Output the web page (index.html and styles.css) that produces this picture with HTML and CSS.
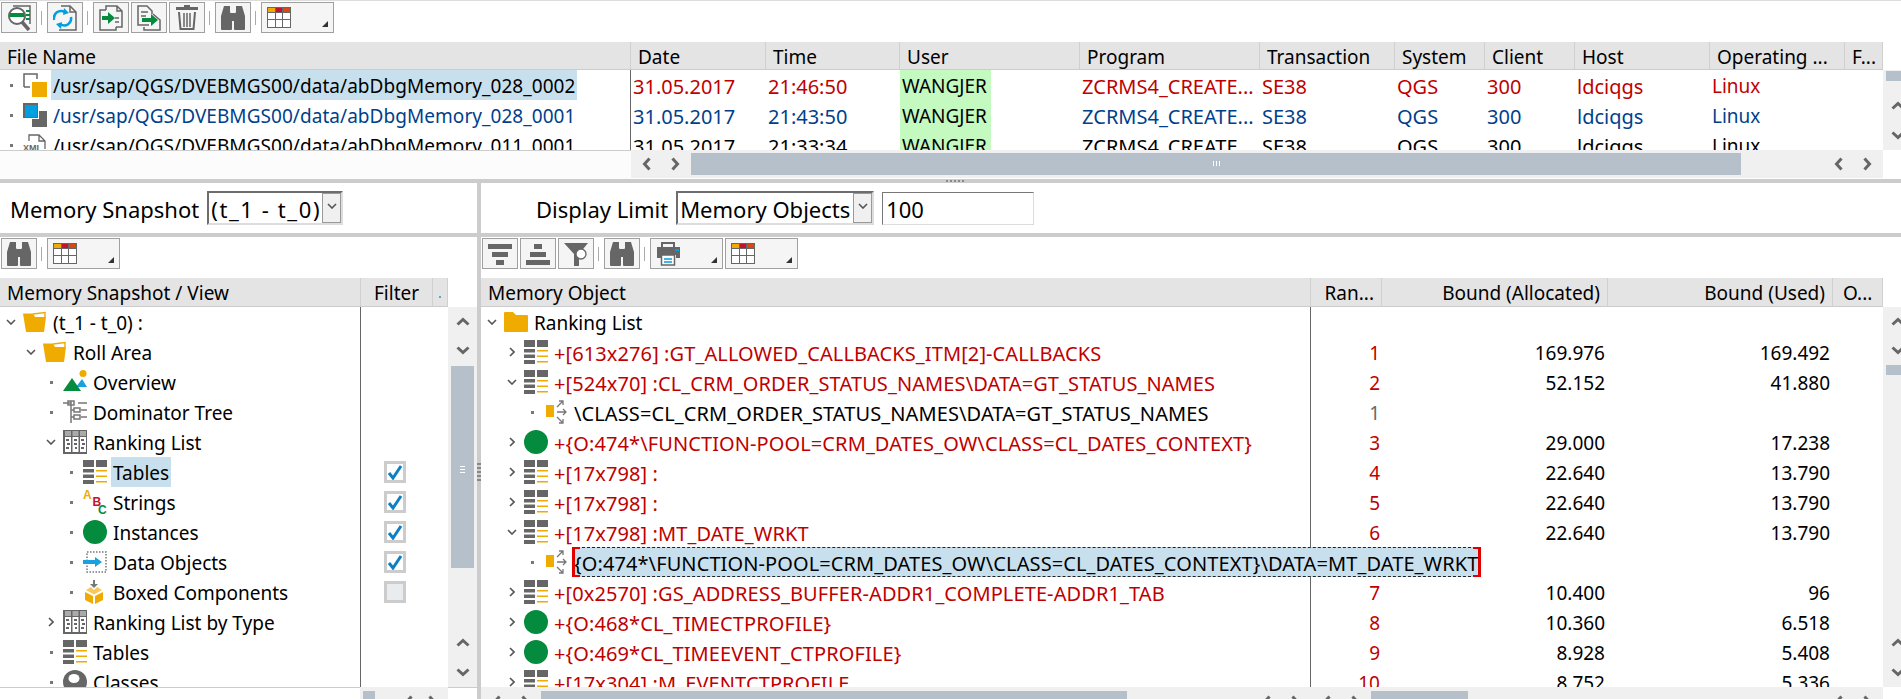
FILE: index.html
```
<!DOCTYPE html>
<html lang="en">
<head>
<meta charset="utf-8">
<title>Memory Inspector</title>
<link rel="stylesheet" href="styles.css">
</head>
<body>
<svg class="defs" xmlns="http://www.w3.org/2000/svg">
  <symbol id="c-d" viewBox="0 0 10 6"><path d="M1 1l4 4 4-4" class="st-ch"/></symbol>
  <symbol id="c-r" viewBox="0 0 6 10"><path d="M1 1l4 4-4 4" class="st-ch"/></symbol>
  <symbol id="sb-u" viewBox="0 0 14 9"><path d="M1.5 7.5L7 2.5l5.5 5" class="st-sb"/></symbol>
  <symbol id="sb-d" viewBox="0 0 14 9"><path d="M1.5 1.5L7 6.5l5.5-5" class="st-sb"/></symbol>
  <symbol id="sb-l" viewBox="0 0 9 14"><path d="M7.5 1.5L2.5 7l5 5.500" class="st-sb"/></symbol>
  <symbol id="sb-r" viewBox="0 0 9 14"><path d="M1.500 1.500L6.500 7l-5 5.500" class="st-sb"/></symbol>

  <symbol id="i-table" viewBox="0 0 24 24">
    <path fill="#666" d="M0 0h11v7H0zM13 0h11v7H13zM0 9h11v3.500H0zM0 14.500h11V18H0zM0 20h11v4H0z"/>
    <path fill="#f0ab00" d="M13 10h11v1.500H13zM13 15.500h11V17H13zM13 21h11v1.500H13z"/>
  </symbol>
  <symbol id="i-inst" viewBox="0 0 24 24"><circle cx="12" cy="12" r="12" fill="#048b3d"/></symbol>
  <symbol id="i-fopen" viewBox="0 0 24 24">
    <path d="M10 4L22 2.500V7" fill="none" stroke="#f0ab00" stroke-width="1.400"/>
    <path fill="#f0ab00" d="M0 3.500h10L12 7h11l-2 15H3z"/>
  </symbol>
  <symbol id="i-folder" viewBox="0 0 24 24">
    <path fill="#f0ab00" d="M0 3a1 1 0 0 1 1-1h8l3 3h11a1 1 0 0 1 1 1v15a1 1 0 0 1-1 1H1a1 1 0 0 1-1-1z"/>
  </symbol>
  <symbol id="i-over" viewBox="0 0 24 24">
    <circle cx="20" cy="3.500" r="3.500" fill="#f0ab00"/>
    <path fill="#1ba1dc" d="M19 9l5 8H13z"/>
    <path fill="#048b3d" d="M9 8l9 13H0z"/>
  </symbol>
  <symbol id="i-dom" viewBox="0 0 24 24">
    <path fill="none" stroke="#777" stroke-width="1.500" d="M0 3h8M8 1v22M8 10h3M8 17h3M15 3h9M18 10h6M18 17h6"/>
    <path fill="none" stroke="#777" stroke-width="1.500" d="M5 1h6v4H5zM11 8h6v4h-6zM11 15h6v4h-6z"/>
  </symbol>
  <symbol id="i-rank" viewBox="0 0 24 24">
    <path fill="#666" d="M0 0h24v24H0z"/>
    <path fill="#aaa" d="M2 1h6v5H2zM9.500 1h6v5h-6zM17 1h6v5h-6z"/>
    <path fill="#fff" d="M2 7h6v15H2zM9.500 7h6v15h-6zM17 7h6v15h-6z"/>
    <path fill="#666" d="M3 9h3v2H3zM4 13h3v2H4zM3 17h3v2H3zM11 9h3v2h-3zM11 13h3v2h-3zM12 17h2v2h-2zM18 9h3v2h-3zM19 13h3v2h-3zM18 17h3v2h-3z"/>
  </symbol>
  <symbol id="i-data" viewBox="0 0 24 24">
    <rect x="4" y="2" width="19" height="20" fill="none" stroke="#777" stroke-width="1.500" stroke-dasharray="1.500 1.500"/>
    <path fill="#1ba1e0" d="M0 10h12V7l7 5-7 5v-3H0z"/>
  </symbol>
  <symbol id="i-box" viewBox="0 0 24 24">
    <path fill="#777" d="M10 0h2v4h3l-4 4-4-4h3z"/>
    <path fill="#f0ab00" d="M2 12l8 4v8l-8-4zM20 12l-8 4v8l8-4z"/>
    <path fill="#f7c85a" d="M3 10l5-3 3 3 3-3 5 3-8 4.500z"/>
  </symbol>
  <symbol id="i-class" viewBox="0 0 24 24">
    <circle cx="12" cy="12" r="12" fill="#666"/><ellipse cx="11" cy="8.500" rx="5.500" ry="4.500" fill="#fff"/>
  </symbol>
  <symbol id="i-link" viewBox="0 0 24 24">
    <rect x="2" y="5" width="8" height="12" fill="#f0ab00"/>
    <path fill="none" stroke="#777" stroke-width="1.300" d="M13 7l6-6M15 1h4v4M13 12h9M19 9l3 3-3 3M13 17l6 6M15 23h4v-4"/>
  </symbol>
  <symbol id="f-a" viewBox="0 0 24 24">
    <path fill="none" stroke="#666" stroke-width="1.500" d="M1 14V1h13v5"/><path fill="none" stroke="#666" stroke-width="1.500" d="M1 14h6"/>
    <rect x="9" y="9" width="15" height="15" fill="#f0ab00"/>
  </symbol>
  <symbol id="f-b" viewBox="0 0 24 24">
    <path fill="#666" d="M9 8h15v16H9z"/><path fill="#fff" d="M0 0h16v16H0z"/>
    <path fill="#666" d="M0 0h15v15H0z"/><path fill="#009fe0" d="M2 2h12v12H2z"/>
  </symbol>

  <symbol id="t-find" viewBox="0 0 24 26">
    <circle cx="10" cy="11" r="8" fill="#fff" stroke="#666" stroke-width="2"/>
    <path stroke="#666" stroke-width="3.500" d="M15 17l7 8"/>
    <path fill="none" stroke="#666" stroke-width="1.500" d="M6 1h17v18"/>
    <path fill="#048b3d" d="M3 8h14v4H3zM19 5h4v2h-4zM19 9h4v2h-4zM19 13h4v2h-4z"/>
  </symbol>
  <symbol id="t-sync" viewBox="0 0 24 26">
    <path fill="none" stroke="#666" stroke-width="1.500" d="M8 1h9l6 6v18H6"/><path fill="none" stroke="#666" stroke-width="1.500" d="M17 1v6h6"/>
    <path fill="none" stroke="#009fe0" stroke-width="2.500" d="M1 15C0 8 6 4 12 7M18 12c1 6-5 11-11 7"/>
    <path fill="#009fe0" d="M11 3l5 5-6 2zM8 24l-5-5 6-2z"/>
  </symbol>
  <symbol id="t-imp" viewBox="0 0 24 26">
    <path fill="none" stroke="#666" stroke-width="1.500" d="M7 5V1h11l5 5v16h-6M18 1v5h5"/>
    <path fill="none" stroke="#666" stroke-width="1.500" d="M7 5H1v20h16v-3"/>
    <path stroke="#666" stroke-width="1.500" d="M16 13h4M16 17h4"/>
    <path fill="#048b3d" d="M3 11h6V7l7 6-7 6v-4H3z"/>
  </symbol>
  <symbol id="t-exp" viewBox="0 0 24 26">
    <path fill="none" stroke="#666" stroke-width="1.500" d="M12 20H1V1h9l5 5v3"/>
    <path stroke="#666" stroke-width="1.500" d="M4 7h7M4 11h5"/>
    <path fill="none" stroke="#666" stroke-width="1.500" d="M16 9l7 6v10H7v-3"/>
    <path fill="#048b3d" d="M5 13h9V9l7 6-7 6v-4H5z"/>
  </symbol>
  <symbol id="t-del" viewBox="0 0 24 26">
    <path fill="#666" d="M9 0h6v2h8v3H1V2h8z"/>
    <path fill="none" stroke="#666" stroke-width="2" d="M4 7l1.500 17h13L20 7"/>
    <path stroke="#666" stroke-width="1.500" d="M9 8v14M12 8v14M15 8v14"/>
  </symbol>
  <symbol id="t-bino" viewBox="0 0 24 26">
    <path fill="#666" d="M3 1h6v6l2 3v14a1 1 0 0 1-1 1H1a1 1 0 0 1-1-1V11zM15 1h6l3 10v13a1 1 0 0 1-1 1h-9a1 1 0 0 1-1-1V10l2-3zM10 8h4v8h-4z"/>
  </symbol>
  <symbol id="t-grid" viewBox="0 0 24 26">
    <path fill="#666" d="M0 2h24v21H0z"/>
    <path fill="#f0ab00" d="M1 3h7v4H1z"/><path fill="#c8102e" d="M9 3h6v4H9z"/><path fill="#d9480f" d="M16 3h7v4h-7z"/>
    <path fill="#fff" d="M1 8h7v6H1zM9 8h6v6H9zM16 8h7v6h-7zM1 15h7v7H1zM9 15h6v7H9zM16 15h7v7h-7z"/>
  </symbol>
  <symbol id="t-sdn" viewBox="0 0 24 26"><path fill="#666" d="M0 3h24v5H0zM4 11h16v5H4zM8 19h8v5H8z"/></symbol>
  <symbol id="t-sup" viewBox="0 0 24 26"><path fill="#666" d="M8 3h8v5H8zM4 11h16v5H4zM0 19h24v5H0z"/></symbol>
  <symbol id="t-fil" viewBox="0 0 24 26">
    <path fill="#666" d="M0 2h24l-9 11v12H10V13z"/>
    <circle cx="17" cy="13" r="5" fill="#fff" stroke="#666" stroke-width="1.300"/>
  </symbol>
  <symbol id="t-prn" viewBox="0 0 24 26">
    <path fill="none" stroke="#666" stroke-width="2" d="M6 6V2h12v4"/>
    <path fill="#666" d="M1 6h23v11h-4v-3H5v3H1z"/><path fill="#009fe0" d="M19 8h4v2h-4z"/>
    <path fill="#fff" stroke="#666" stroke-width="1.500" d="M5.500 14h13v10h-13z"/>
    <path stroke="#009fe0" stroke-width="1.500" d="M8 18h8M8 21h8"/>
  </symbol>
</svg>

<main class="app">
  <section class="top">
    <div class="toolbar">
      <button class="btn"><svg class="tic"><use href="#t-find"/></svg></button><i class="sep"></i>
      <button class="btn"><svg class="tic"><use href="#t-sync"/></svg></button><i class="sep"></i>
      <button class="btn"><svg class="tic"><use href="#t-imp"/></svg></button>
      <button class="btn"><svg class="tic"><use href="#t-exp"/></svg></button>
      <button class="btn"><svg class="tic"><use href="#t-del"/></svg></button><i class="sep"></i>
      <button class="btn"><svg class="tic"><use href="#t-bino"/></svg></button><i class="sep"></i>
      <button class="btn btn-menu"><svg class="tic"><use href="#t-grid"/></svg></button>
    </div>
    <div class="head head-top files">
      <div class="hc">File Name</div><div class="hc">Date</div><div class="hc">Time</div><div class="hc">User</div><div class="hc">Program</div><div class="hc">Transaction</div><div class="hc">System</div><div class="hc">Client</div><div class="hc">Host</div><div class="hc">Operating ...</div><div class="hc hc-more">F...</div>
    </div>
    <div class="body-top">
      <div class="rows-top">
        <div class="frow files red">
          <div class="fc fc-name"><i class="dot"></i><svg class="ico"><use href="#f-a"/></svg><span class="lbl hl black path">/usr/sap/QGS/DVEBMGS00/data/abDbgMemory_028_0002</span></div>
          <div class="dc">31.05.2017</div><div class="dc">21:46:50</div><div class="dc"><span class="user">WANGJER</span></div><div class="dc">ZCRMS4_CREATE...</div><div class="dc">SE38</div><div class="dc">QGS</div><div class="dc">300</div><div class="dc">ldciqgs</div><div class="dc dc-os">Linux</div>
        </div>
        <div class="frow files blue">
          <div class="fc fc-name"><i class="dot"></i><svg class="ico"><use href="#f-b"/></svg><span class="lbl path">/usr/sap/QGS/DVEBMGS00/data/abDbgMemory_028_0001</span></div>
          <div class="dc">31.05.2017</div><div class="dc">21:43:50</div><div class="dc"><span class="user">WANGJER</span></div><div class="dc">ZCRMS4_CREATE...</div><div class="dc">SE38</div><div class="dc">QGS</div><div class="dc">300</div><div class="dc">ldciqgs</div><div class="dc dc-os">Linux</div>
        </div>
        <div class="frow files">
          <div class="fc fc-name"><i class="dot"></i><svg class="ico" viewBox="0 0 24 24"><path fill="none" stroke="#666" stroke-width="1.300" d="M6 8V2h10l6 6v8M16 2v6h6"/><text x="0" y="18" class="xml">XML</text></svg><span class="lbl path">/usr/sap/QGS/DVEBMGS00/data/abDbgMemory_011_0001</span></div>
          <div class="dc">31.05.2017</div><div class="dc">21:33:34</div><div class="dc"><span class="user">WANGJER</span></div><div class="dc">ZCRMS4_CREATE...</div><div class="dc">SE38</div><div class="dc">QGS</div><div class="dc">300</div><div class="dc">ldciqgs</div><div class="dc dc-os">Linux</div>
        </div>
      </div>
      <div class="vbar vbar-clip">
        <div class="vbar-in">
          <div class="vthumb vthumb-top"></div>
          <div class="vspace"></div>
          <div class="varrow"><svg class="sb-v"><use href="#sb-u"/></svg></div>
          <div class="varrow"><svg class="sb-v"><use href="#sb-d"/></svg></div>
        </div>
      </div>
    </div>
    <div class="foot-top">
      <div class="blank blank-name"></div>
      <div class="hbar hbar-top">
        <span class="harrows"><svg class="sb-h"><use href="#sb-l"/></svg><svg class="sb-h"><use href="#sb-r"/></svg></span>
        <div class="hthumb hthumb-top"><i class="grip-h"></i></div>
        <span class="harrows harrows-end"><svg class="sb-h"><use href="#sb-l"/></svg><svg class="sb-h"><use href="#sb-r"/></svg></span>
      </div>
    </div>
  </section>
  <div class="split-h"><i class="grip-top"></i></div>

  <section class="lower">
    <div class="pane pane-left">
      <div class="param">
        <label class="plabel">Memory Snapshot</label>
        <div class="combo combo-snap"><span class="combo-val combo-wide">(t_1 - t_0)</span><span class="combo-btn"><svg class="chev-d"><use href="#c-d"/></svg></span></div>
      </div>
      <div class="split-bar"></div>
      <div class="toolbar toolbar-low">
        <button class="btn"><svg class="tic"><use href="#t-bino"/></svg></button><i class="sep"></i>
        <button class="btn btn-menu"><svg class="tic"><use href="#t-grid"/></svg></button>
      </div>
      <div class="head head-low nav">
        <div class="hc">Memory Snapshot / View</div><div class="hc hc-filter">Filter</div><div class="hc hc-mini"><i class="mini-dot"></i></div>
      </div>
      <div class="body-low">
        <div class="rows-low nav-rows">
          <div class="trow nav-row"><div class="tc l0"><span class="exp"><svg class="chev-d"><use href="#c-d"/></svg></span><svg class="ico"><use href="#i-fopen"/></svg><span class="lbl">(t_1 - t_0) :</span></div><div class="fc2"></div></div>
          <div class="trow nav-row"><div class="tc l1"><span class="exp"><svg class="chev-d"><use href="#c-d"/></svg></span><svg class="ico"><use href="#i-fopen"/></svg><span class="lbl">Roll Area</span></div><div class="fc2"></div></div>
          <div class="trow nav-row"><div class="tc l2"><span class="exp"><i class="dot"></i></span><svg class="ico"><use href="#i-over"/></svg><span class="lbl">Overview</span></div><div class="fc2"></div></div>
          <div class="trow nav-row"><div class="tc l2"><span class="exp"><i class="dot"></i></span><svg class="ico"><use href="#i-dom"/></svg><span class="lbl">Dominator Tree</span></div><div class="fc2"></div></div>
          <div class="trow nav-row"><div class="tc l2"><span class="exp"><svg class="chev-d"><use href="#c-d"/></svg></span><svg class="ico"><use href="#i-rank"/></svg><span class="lbl">Ranking List</span></div><div class="fc2"></div></div>
          <div class="trow nav-row"><div class="tc l3"><span class="exp"><i class="dot"></i></span><svg class="ico"><use href="#i-table"/></svg><span class="lbl hl">Tables</span></div><div class="fc2"><span class="check"><svg class="tick" viewBox="0 0 16 16"><path d="M2 9l4 5 8-12" class="st-tick"/></svg></span></div></div>
          <div class="trow nav-row"><div class="tc l3"><span class="exp"><i class="dot"></i></span><svg class="ico" viewBox="0 0 24 24"><text x="0" y="9" class="abc abc-a">A</text><text x="9.500" y="16" class="abc abc-b">B</text><text x="15" y="24" class="abc abc-c">C</text></svg><span class="lbl">Strings</span></div><div class="fc2"><span class="check"><svg class="tick" viewBox="0 0 16 16"><path d="M2 9l4 5 8-12" class="st-tick"/></svg></span></div></div>
          <div class="trow nav-row"><div class="tc l3"><span class="exp"><i class="dot"></i></span><svg class="ico"><use href="#i-inst"/></svg><span class="lbl">Instances</span></div><div class="fc2"><span class="check"><svg class="tick" viewBox="0 0 16 16"><path d="M2 9l4 5 8-12" class="st-tick"/></svg></span></div></div>
          <div class="trow nav-row"><div class="tc l3"><span class="exp"><i class="dot"></i></span><svg class="ico"><use href="#i-data"/></svg><span class="lbl">Data Objects</span></div><div class="fc2"><span class="check"><svg class="tick" viewBox="0 0 16 16"><path d="M2 9l4 5 8-12" class="st-tick"/></svg></span></div></div>
          <div class="trow nav-row"><div class="tc l3"><span class="exp"><i class="dot"></i></span><svg class="ico"><use href="#i-box"/></svg><span class="lbl">Boxed Components</span></div><div class="fc2"><span class="check check-off"></span></div></div>
          <div class="trow nav-row"><div class="tc l2"><span class="exp"><svg class="chev-r"><use href="#c-r"/></svg></span><svg class="ico"><use href="#i-rank"/></svg><span class="lbl">Ranking List by Type</span></div><div class="fc2"></div></div>
          <div class="trow nav-row"><div class="tc l2"><span class="exp"><i class="dot"></i></span><svg class="ico"><use href="#i-table"/></svg><span class="lbl">Tables</span></div><div class="fc2"></div></div>
          <div class="trow nav-row"><div class="tc l2"><span class="exp"><i class="dot"></i></span><svg class="ico"><use href="#i-class"/></svg><span class="lbl">Classes</span></div><div class="fc2"></div></div>
        </div>
        <div class="vbar">
          <div class="vbar-in">
            <div class="varrow varrow-first"><svg class="sb-v"><use href="#sb-u"/></svg></div>
            <div class="varrow"><svg class="sb-v"><use href="#sb-d"/></svg></div>
            <div class="vthumb vthumb-nav"><i class="grip-v"></i></div>
            <div class="vspace"></div>
            <div class="varrow"><svg class="sb-v"><use href="#sb-u"/></svg></div>
            <div class="varrow"><svg class="sb-v"><use href="#sb-d"/></svg></div>
          </div>
        </div>
      </div>
      <div class="foot-low foot-left">
        <div class="blank-low"></div>
        <div class="hbar hbar-nav">
          <div class="hthumb hthumb-nav"></div>
          <span class="harrows harrows-nav"><svg class="sb-h"><use href="#sb-l"/></svg><svg class="sb-h"><use href="#sb-r"/></svg></span>
        </div>
      </div>
    </div>

    <div class="split-v"><i class="grip-v2"></i></div>

    <div class="pane pane-right">
      <div class="param param-right">
        <label class="plabel">Display Limit</label>
        <div class="combo combo-limit"><span class="combo-val">Memory Objects</span><span class="combo-btn"><svg class="chev-d"><use href="#c-d"/></svg></span></div>
        <div class="field">100</div>
      </div>
      <div class="split-bar"></div>
      <div class="toolbar toolbar-low toolbar-right">
        <button class="btn"><svg class="tic"><use href="#t-sdn"/></svg></button>
        <button class="btn"><svg class="tic"><use href="#t-sup"/></svg></button>
        <button class="btn"><svg class="tic"><use href="#t-fil"/></svg></button><i class="sep"></i>
        <button class="btn"><svg class="tic"><use href="#t-bino"/></svg></button><i class="sep"></i>
        <button class="btn btn-menu"><svg class="tic"><use href="#t-prn"/></svg></button>
        <button class="btn btn-menu"><svg class="tic"><use href="#t-grid"/></svg></button>
      </div>
      <div class="head head-low objs">
        <div class="hc">Memory Object</div><div class="hc hc-r">Ran...</div><div class="hc hc-r">Bound (Allocated)</div><div class="hc hc-r">Bound (Used)</div><div class="hc hc-o">O...</div>
      </div>
      <div class="body-low">
        <div class="rows-low obj-rows">
          <div class="trow objs"><div class="tc l0 tc-obj"><span class="exp"><svg class="chev-d"><use href="#c-d"/></svg></span><svg class="ico"><use href="#i-folder"/></svg><span class="lbl">Ranking List</span></div><div class="num"></div><div class="num"></div><div class="num"></div></div>
          <div class="trow objs"><div class="tc l1 tc-obj"><span class="exp"><svg class="chev-r"><use href="#c-r"/></svg></span><svg class="ico"><use href="#i-table"/></svg><span class="lbl obj red">+[613x276] :GT_ALLOWED_CALLBACKS_ITM[2]-CALLBACKS</span></div><div class="num red">1</div><div class="num">169.976</div><div class="num">169.492</div></div>
          <div class="trow objs"><div class="tc l1 tc-obj"><span class="exp"><svg class="chev-d"><use href="#c-d"/></svg></span><svg class="ico"><use href="#i-table"/></svg><span class="lbl obj red">+[524x70] :CL_CRM_ORDER_STATUS_NAMES\DATA=GT_STATUS_NAMES</span></div><div class="num red">2</div><div class="num">52.152</div><div class="num">41.880</div></div>
          <div class="trow objs"><div class="tc l2 tc-obj"><span class="exp"><i class="dot"></i></span><svg class="ico"><use href="#i-link"/></svg><span class="lbl obj">\CLASS=CL_CRM_ORDER_STATUS_NAMES\DATA=GT_STATUS_NAMES</span></div><div class="num gray">1</div><div class="num"></div><div class="num"></div></div>
          <div class="trow objs"><div class="tc l1 tc-obj"><span class="exp"><svg class="chev-r"><use href="#c-r"/></svg></span><svg class="ico"><use href="#i-inst"/></svg><span class="lbl obj red">+{O:474*\FUNCTION-POOL=CRM_DATES_OW\CLASS=CL_DATES_CONTEXT}</span></div><div class="num red">3</div><div class="num">29.000</div><div class="num">17.238</div></div>
          <div class="trow objs"><div class="tc l1 tc-obj"><span class="exp"><svg class="chev-r"><use href="#c-r"/></svg></span><svg class="ico"><use href="#i-table"/></svg><span class="lbl obj red">+[17x798] :</span></div><div class="num red">4</div><div class="num">22.640</div><div class="num">13.790</div></div>
          <div class="trow objs"><div class="tc l1 tc-obj"><span class="exp"><svg class="chev-r"><use href="#c-r"/></svg></span><svg class="ico"><use href="#i-table"/></svg><span class="lbl obj red">+[17x798] :</span></div><div class="num red">5</div><div class="num">22.640</div><div class="num">13.790</div></div>
          <div class="trow objs"><div class="tc l1 tc-obj"><span class="exp"><svg class="chev-d"><use href="#c-d"/></svg></span><svg class="ico"><use href="#i-table"/></svg><span class="lbl obj red">+[17x798] :MT_DATE_WRKT</span></div><div class="num red">6</div><div class="num">22.640</div><div class="num">13.790</div></div>
          <div class="trow objs trow-sel"><div class="tc l2 tc-obj"><span class="exp"><i class="dot"></i></span><svg class="ico"><use href="#i-link"/></svg><span class="lbl obj sel">{O:474*\FUNCTION-POOL=CRM_DATES_OW\CLASS=CL_DATES_CONTEXT}\DATA=MT_DATE_WRKT<i class="brk brk-l"></i><i class="brk brk-r"></i></span></div><div class="num"></div><div class="num"></div><div class="num"></div></div>
          <div class="trow objs"><div class="tc l1 tc-obj"><span class="exp"><svg class="chev-r"><use href="#c-r"/></svg></span><svg class="ico"><use href="#i-table"/></svg><span class="lbl obj red">+[0x2570] :GS_ADDRESS_BUFFER-ADDR1_COMPLETE-ADDR1_TAB</span></div><div class="num red">7</div><div class="num">10.400</div><div class="num">96</div></div>
          <div class="trow objs"><div class="tc l1 tc-obj"><span class="exp"><svg class="chev-r"><use href="#c-r"/></svg></span><svg class="ico"><use href="#i-inst"/></svg><span class="lbl obj red">+{O:468*CL_TIMECTPROFILE}</span></div><div class="num red">8</div><div class="num">10.360</div><div class="num">6.518</div></div>
          <div class="trow objs"><div class="tc l1 tc-obj"><span class="exp"><svg class="chev-r"><use href="#c-r"/></svg></span><svg class="ico"><use href="#i-inst"/></svg><span class="lbl obj red">+{O:469*CL_TIMEEVENT_CTPROFILE}</span></div><div class="num red">9</div><div class="num">8.928</div><div class="num">5.408</div></div>
          <div class="trow objs"><div class="tc l1 tc-obj"><span class="exp"><svg class="chev-r"><use href="#c-r"/></svg></span><svg class="ico"><use href="#i-table"/></svg><span class="lbl obj red">+[17x304] :M_EVENTCTPROFILE</span></div><div class="num red">10</div><div class="num">8.752</div><div class="num">5.336</div></div>
        </div>
        <div class="vbar vbar-clip">
          <div class="vbar-in">
            <div class="varrow varrow-first"><svg class="sb-v"><use href="#sb-u"/></svg></div>
            <div class="varrow"><svg class="sb-v"><use href="#sb-d"/></svg></div>
            <div class="vthumb vthumb-obj"></div>
            <div class="vspace"></div>
            <div class="varrow"><svg class="sb-v"><use href="#sb-u"/></svg></div>
            <div class="varrow"><svg class="sb-v"><use href="#sb-d"/></svg></div>
          </div>
        </div>
      </div>
      <div class="foot-low foot-right">
        <div class="hbar hbar-a">
          <span class="harrows"><svg class="sb-h"><use href="#sb-l"/></svg><svg class="sb-h"><use href="#sb-r"/></svg></span>
          <div class="hthumb hthumb-a"></div>
          <span class="harrows harrows-end"><svg class="sb-h"><use href="#sb-l"/></svg><svg class="sb-h"><use href="#sb-r"/></svg></span>
        </div>
        <div class="hbar hbar-b">
          <span class="harrows"><svg class="sb-h"><use href="#sb-l"/></svg><svg class="sb-h"><use href="#sb-r"/></svg></span>
          <div class="hthumb hthumb-b"></div>
          <span class="harrows harrows-end"><svg class="sb-h"><use href="#sb-l"/></svg><svg class="sb-h"><use href="#sb-r"/></svg></span>
        </div>
      </div>
    </div>
  </section>
</main>
</body>
</html>
```
FILE: styles.css
```
* { box-sizing: border-box; }
html, body { margin: 0; padding: 0; height: 100%; overflow: hidden; background: #fff; }
body { font-family: "Noto Sans", "Open Sans", sans-serif; font-size: 19px; color: #000; }
.defs { position: absolute; width: 0; height: 0; overflow: hidden; }
.st-ch { fill: none; stroke: #555; stroke-width: 1.6; }
.st-sb { fill: none; stroke: #666; stroke-width: 3; }
.st-tick { fill: none; stroke: #0f7fc4; stroke-width: 3; }
.abc { font-family: "Liberation Sans", sans-serif; font-weight: 700; font-size: 12px; }
.abc-a { fill: #f0ab00; }
.abc-b { fill: #c8102e; }
.abc-c { fill: #048b3d; }
.xml { font-family: "Liberation Sans", sans-serif; font-weight: 700; font-size: 9px; fill: #666; }

.app { width: 1901px; height: 699px; display: flex; flex-direction: column; overflow: hidden; }
.top { height: 179px; flex: none; border-top: 1px solid #ddd; }
.toolbar { height: 41px; display: flex; align-items: flex-start; gap: 2px; padding: 1px 0 0 1px; }
.btn { width: 36px; height: 31px; padding: 0; flex: none; background: #f5f5f5; border: 1px solid #a0a0a0; position: relative; display: flex; align-items: center; justify-content: center; }
.btn-menu { width: 73px; justify-content: flex-start; padding-left: 5px; }
.btn-menu::after { content: ""; position: absolute; right: 5px; bottom: 5px; border-style: solid; border-width: 0 0 6px 6px; border-color: transparent transparent #333 transparent; }
.tic { width: 24px; height: 26px; flex: none; }
.sep { width: 1px; height: 14px; margin: 9px 3px 0 2px; background: #aaa; flex: none; }

.head { background: #e4e4e4; border-bottom: 1px solid #ccc; display: grid; }
.hc { padding: 0 7px; overflow: hidden; white-space: nowrap; border-right: 1px solid #d0d0d0; line-height: 30px; }
.hc-r { text-align: right; }
.hc-more { padding-left: 7px; }
.hc-o { padding-left: 10px; }
.hc-filter { padding-left: 13px; }
.hc-mini { position: relative; }
.mini-dot { position: absolute; right: 6px; bottom: 8px; width: 2px; height: 2px; background: #5aa7d6; }
.head-top { height: 28px; width: 1883px; }
.head-low { height: 29px; }
.head-low .hc { line-height: 31px; }
.files { grid-template-columns: 631px 135px 134px 180px 180px 135px 90px 90px 135px 135px 38px; }

.body-top { display: flex; height: 80px; }
.rows-top { width: 1883px; overflow: hidden; }
.frow { display: grid; height: 30px; line-height: 33px; white-space: nowrap; }
.fc { display: flex; align-items: center; }
.fc-name { padding-left: 21px; position: relative; border-right: 1px solid #666; height: 30px; }
.fc-name .dot { position: absolute; left: 10px; top: 14px; }
.dc { padding-left: 2px; overflow: hidden; height: 30px; font-size: 20px; }
.dc-os { font-size: 19px; }
.path { letter-spacing: 0.05px; }
.user { display: block; height: 30px; margin-left: -2px; padding: 0 2px; width: 91px; background: #c4f9bf; color: #000; font-size: 19px; }
.red { color: #bf0000; }
.blue { color: #003f8c; }
.gray { color: #666; }
.black { color: #000; }
.hl { background: #c8e0ee; }

.vbar { width: 29px; flex: none; background: #f0f0f0; overflow: hidden; }
.vbar-clip { width: 18px; }
.vbar-in { width: 29px; height: 100%; display: flex; flex-direction: column; align-items: center; }
.vspace { flex: 1; }
.varrow { height: 30px; width: 29px; display: flex; align-items: center; justify-content: center; flex: none; }
.varrow-first { height: 28px; }
.sb-v { width: 14px; height: 9px; }
.vthumb { width: 23px; background: #b6c0ca; flex: none; position: relative; }
.vthumb-top { height: 10px; margin-top: 1px; }
.vthumb-nav { height: 202px; margin-top: 1px; }
.vthumb-obj { height: 10px; }
.grip-v { position: absolute; left: 9px; top: 100px; width: 5px; height: 7px; background: repeating-linear-gradient(#fff 0 1px, transparent 1px 3px); }

.foot-top { height: 29px; display: flex; }
.blank-name { width: 631px; border-top: 1px solid #ccc; background: #fcfcfc; }
.hbar { height: 29px; background: #f0f0f0; display: flex; align-items: center; overflow: hidden; flex: none; }
.hbar-top { width: 1252px; height: 28px; }
.harrows { width: 60px; display: flex; justify-content: space-around; flex: none; padding: 0 1px; }
.harrows-end { margin-left: auto; }
.sb-h { width: 9px; height: 14px; }
.hthumb { height: 22px; background: #b6c0ca; flex: none; position: relative; }
.hthumb-top { width: 1050px; }
.grip-h { position: absolute; left: 522px; top: 8px; width: 7px; height: 5px; background: repeating-linear-gradient(90deg, #fff 0 1px, transparent 1px 3px); }

.split-h { height: 4px; flex: none; background: #ccc; position: relative; }
.grip-top { position: absolute; left: 946px; top: 1px; width: 19px; height: 2px; background: repeating-linear-gradient(90deg, #888 0 2px, transparent 2px 4px); }

.lower { flex: 1; display: flex; min-height: 0; }
.pane { display: flex; flex-direction: column; overflow: hidden; }
.pane-left { width: 477px; flex: none; }
.pane-right { width: 1420px; flex: none; }
.split-v { width: 4px; flex: none; background: #ccc; position: relative; }
.grip-v2 { position: absolute; left: 0; top: 280px; width: 4px; height: 18px; background: repeating-linear-gradient(#888 0 2px, transparent 2px 4px); }

.param { height: 50px; flex: none; display: flex; align-items: center; gap: 8px; padding-left: 10px; }
.param-right { padding-left: 55px; }
.plabel { white-space: nowrap; font-size: 22px; padding-top: 2px; }
.combo { height: 34px; display: flex; align-items: stretch; background: #fff; border: 2px solid #6d6d6d; border-right-color: #ddd; border-bottom-color: #ddd; font-size: 22px; line-height: 33px; }
.combo-val { flex: 1; padding-left: 2px; white-space: nowrap; overflow: hidden; }
.combo-wide { letter-spacing: 1.6px; }
.combo-btn { width: 19px; flex: none; background: #f0f0f0; border: 1px solid #999; display: flex; justify-content: center; padding-top: 9px; }
.combo-snap { width: 136px; }
.combo-limit { width: 198px; }
.field { width: 152px; height: 33px; border: 1px solid #777; border-right-color: #ddd; border-bottom-color: #ddd; padding-left: 3px; line-height: 33px; font-size: 22px; }
.chev-d { width: 10px; height: 6px; }
.chev-r { width: 6px; height: 10px; }

.split-bar { height: 4px; flex: none; background: #ccc; }
.toolbar-low { padding-top: 1px; }
.toolbar-right { padding-left: 1px; }

.nav { grid-template-columns: 361px 72px 15px; width: 448px; }
.objs { grid-template-columns: 830px 71px 226px 225px 50px; }
.head.objs { width: 1402px; }

.body-low { display: flex; height: 380px; flex: none; }
.rows-low { flex: 1; overflow: hidden; min-width: 0; }
.trow { display: grid; height: 30px; line-height: 33px; white-space: nowrap; }
.nav-row { grid-template-columns: 361px 87px; }
.tc { display: flex; align-items: center; height: 30px; border-right: 1px solid #666; min-width: 0; }
.l0 { padding-left: 1px; }
.l1 { padding-left: 21px; }
.l2 { padding-left: 41px; }
.l3 { padding-left: 61px; }
.exp { width: 20px; flex: none; display: flex; justify-content: center; align-items: center; }
.dot { width: 3px; height: 3px; background: #777; display: block; flex: none; }
.ico { width: 24px; height: 24px; margin-left: 2px; flex: none; }
.lbl { margin-left: 4px; padding: 0 2px; height: 30px; line-height: 33px; white-space: nowrap; }
.obj { font-size: 20px; letter-spacing: 0.1px; }
.fc2 { display: flex; justify-content: flex-start; align-items: center; padding-left: 23px; height: 30px; }
.check { width: 22px; height: 22px; border: 3px solid #ccc; background: #fff; display: flex; align-items: center; justify-content: center; }
.check-off { background: #e8ecef; }
.tick { width: 16px; height: 16px; }
.num { text-align: right; padding-right: 2px; overflow: hidden; height: 30px; }
.num + .num { padding-right: 3px; }
.trow-sel { position: relative; }
.tc-obj { overflow: visible; }
.sel { background: #c8e0ee; position: relative; z-index: 1; outline: 1px dashed #222; outline-offset: -1px; }
.brk { position: absolute; top: 0; bottom: 0; width: 8px; border: 0 solid #e00000; border-width: 2px 0; }
.brk-l { left: 0; border-left-width: 3px; }
.brk-r { right: 0; border-right-width: 3px; }

.foot-low { height: 12px; flex: none; display: flex; overflow: hidden; }
.foot-left { box-shadow: inset 0 1px 0 #ccc; }
.blank-low { width: 360px; flex: none; }
.hbar-nav { width: 88px; padding-left: 3px; }
.hthumb-nav { width: 12px; }
.harrows-nav { margin-left: 20px; width: 50px; }
.hbar-a { width: 830px; }
.hbar-b { width: 572px; }
.hthumb-a { width: 586px; }
.hthumb-b { width: 97px; }
```
